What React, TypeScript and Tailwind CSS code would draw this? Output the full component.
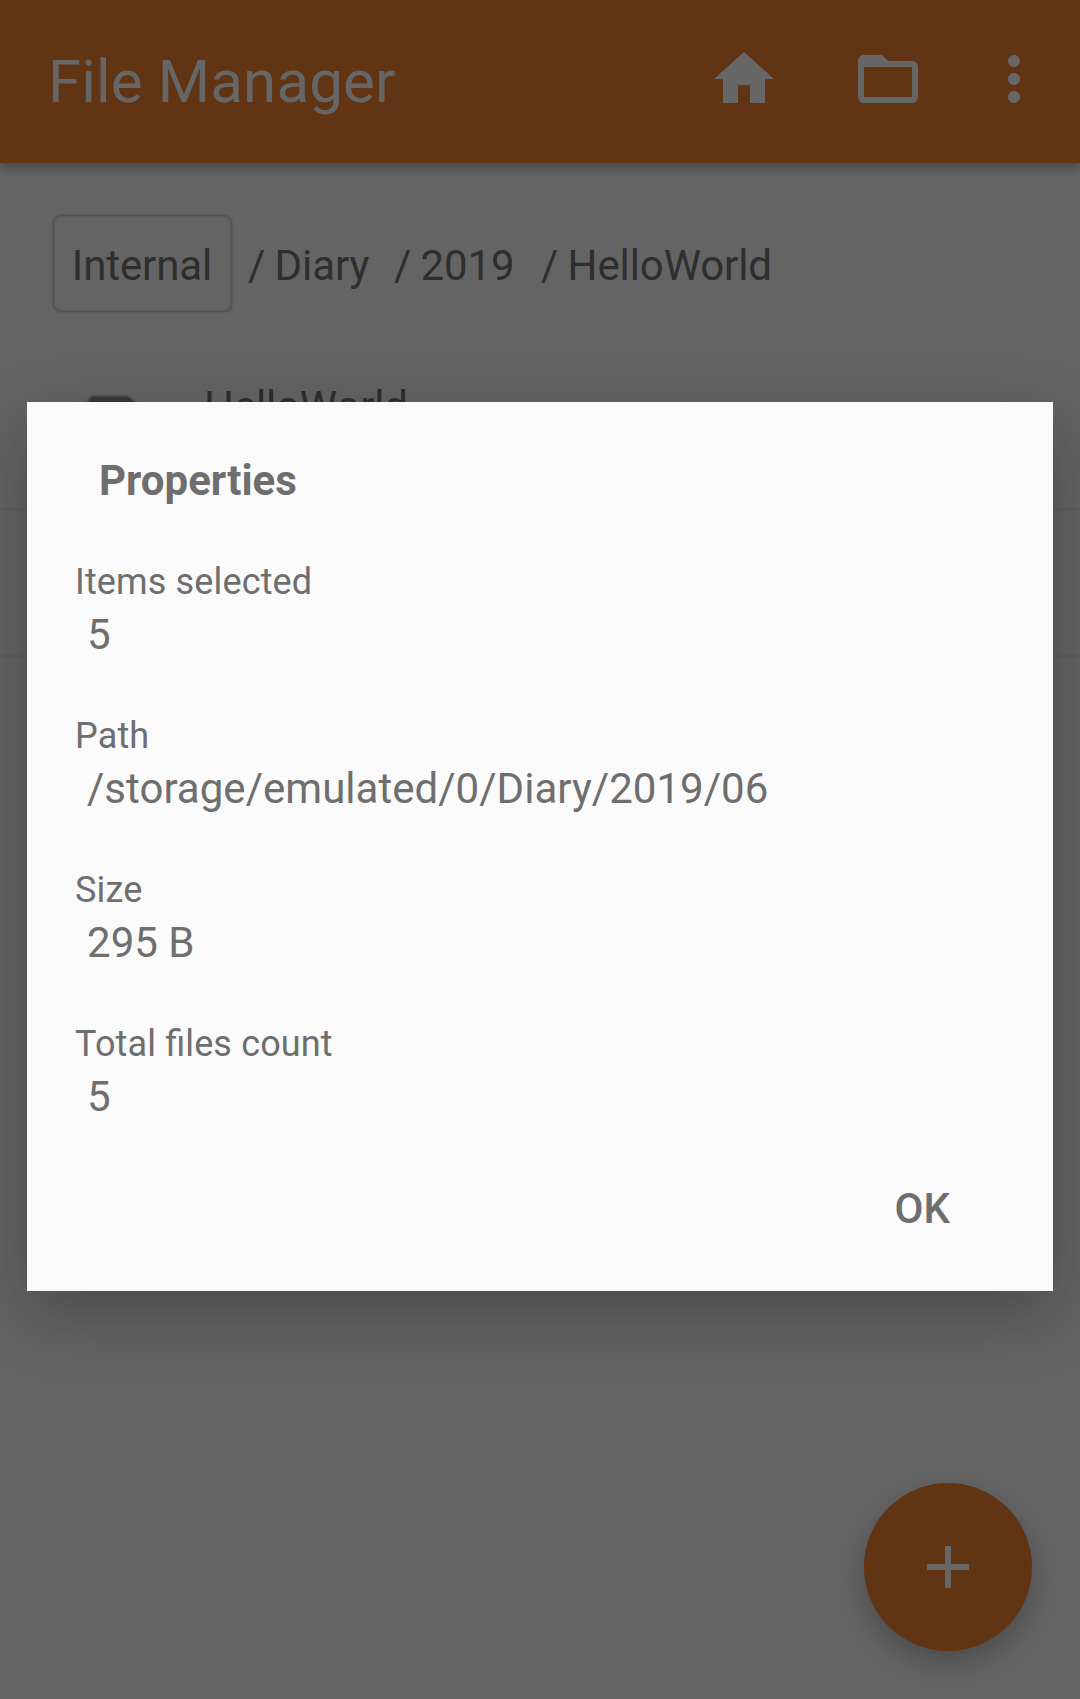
import React from "react";

const crumbs = [
  { name: "Diary", width: "w-[146px]" },
  { name: "2019", width: "w-[147px]" },
  { name: "HelloWorld", width: "w-[240px]" },
];

const properties = [
  { label: "Items selected", value: "5" },
  { label: "Path", value: "/storage/emulated/0/Diary/2019/06" },
  { label: "Size", value: "295 B" },
  { label: "Total files count", value: "5" },
];

function Icon({ d, className = "" }: { d: string; className?: string }) {
  return (
    <svg viewBox="0 0 24 24" className={`size-[72px] shrink-0 ${className}`} fill="currentColor">
      <path d={d} />
    </svg>
  );
}

function TopBar() {
  return (
    <header className="z-10 flex h-[163px] shrink-0 items-start bg-[#613414] pt-[43px] pl-12 pr-[30px] text-[#666666] shadow-[0_4px_10px_rgba(0,0,0,0.32)]">
      <h1 className="mt-[3px] flex-1 text-[60px] leading-[72px] tracking-[0.15px]">File Manager</h1>
      <Icon d="M10 20v-6h4v6h5v-8h3L12 3 2 12h3v8z" />
      <Icon
        className="ml-[72px]"
        d="M20 6h-8l-2-2H4c-1.1 0-1.99.9-1.99 2L2 18c0 1.1.9 2 2 2h16c1.1 0 2-.9 2-2V8c0-1.1-.9-2-2-2zm0 12H4V8h16v10z"
      />
      <Icon
        className="ml-[54px]"
        d="M12 8c1.1 0 2-.9 2-2s-.9-2-2-2-2 .9-2 2 .9 2 2 2zm0 2c-1.1 0-2 .9-2 2s.9 2 2 2 2-.9 2-2-.9-2-2-2zm0 6c-1.1 0-2 .9-2 2s.9 2 2 2 2-.9 2-2-.9-2-2-2z"
      />
    </header>
  );
}

function Breadcrumbs() {
  return (
    <nav className="mt-[52px] ml-[53px] flex h-[97px] items-center text-[42px] leading-[50px]">
      <div className="flex h-[97px] w-[179px] items-center justify-center rounded-[8px] border border-[#515151] shadow-[0_0_2px_#484848,inset_0_0_2px_#484848]">
        <span className="mt-[4px] mr-px tracking-[-0.1px]">Internal</span>
      </div>
      <div className="mt-[4px] ml-[16px] flex tracking-[-0.1px] [word-spacing:-1px]">
        {crumbs.map((c) => (
          <span key={c.name} className={`whitespace-nowrap ${c.width}`}>
            / {c.name}
          </span>
        ))}
      </div>
    </nav>
  );
}

function FileList() {
  return (
    <div className="mt-[49px]">
      <div className="flex h-[150px] items-start border-b-[3px] border-[#5f5f5f] pl-[88px]">
        <svg viewBox="0 0 48 60" className="mt-[35px] h-[60px] w-12 blur-[1px]" fill="#383838">
          <path d="M6 0h34l8 7v53H0V6q1-6 6-6z" />
        </svg>
        <span className="mt-[21px] ml-[68px] text-[42px] leading-[50px] tracking-[-0.15px]">HelloWorld</span>
      </div>
      <div className="h-[147px] border-b-[3px] border-[#5f5f5f]" />
    </div>
  );
}

function PropertiesDialog() {
  return (
    <section
      role="dialog"
      className="absolute top-[402px] left-[27px] z-20 flex h-[889px] w-[1026px] flex-col bg-[#fafafa] px-12 text-[#6e6e6e] shadow-[0_22px_64px_rgba(0,0,0,0.27)]"
    >
      <h2 className="mt-[54px] ml-6 text-[42px] leading-[50px] font-bold">Properties</h2>
      <dl className="mt-[55px] flex flex-col gap-[56px]">
        {properties.map((p) => (
          <div key={p.label} className="h-[98px]">
            <dt className="h-[49px] text-[36px] leading-[42px] tracking-[0.14px] [font-feature-settings:'liga']">
              {p.label}
            </dt>
            <dd className="ml-3 text-[42px] leading-[50px] tracking-[0.03px]">{p.value}</dd>
          </div>
        ))}
      </dl>
      <button className="mt-[63px] mr-[55px] self-end text-[42px] leading-[50px] font-medium">OK</button>
    </section>
  );
}

export default function App() {
  return (
    <main className="relative flex h-[1699px] w-[1080px] flex-col overflow-hidden bg-[#646464] font-[Roboto,sans-serif] text-[#2e2e2e]">
      <TopBar />
      <Breadcrumbs />
      <FileList />
      <button
        aria-label="Add"
        className="absolute top-[1483px] left-[864px] flex size-[168px] items-center justify-center rounded-full bg-[#613414] text-[#666666] shadow-[0_12px_28px_rgba(0,0,0,0.24)]"
      >
        <Icon d="M19 13h-6v6h-2v-6H5v-2h6V5h2v6h6z" />
      </button>
      <PropertiesDialog />
    </main>
  );
}
